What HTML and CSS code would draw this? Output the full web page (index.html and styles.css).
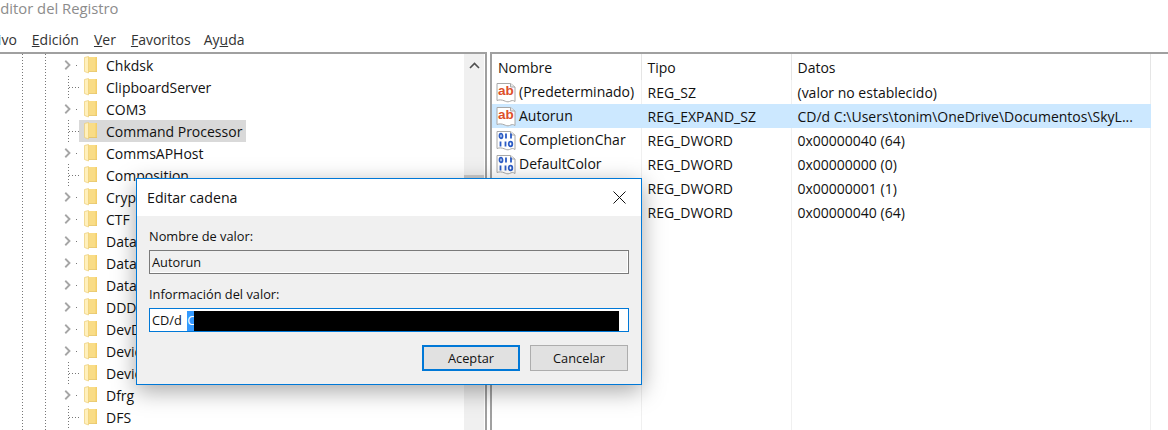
FILE: index.html
```html
<!DOCTYPE html>
<html lang="es">
    <head>
        <meta charset="UTF-8" />
        <title>Editor del Registro</title>
        <link rel="stylesheet" href="styles.css">
    </head>
    <body>
        <svg class="defs" width="0" height="0">
            <symbol id="folder" viewBox="0 0 13 18">
                <path d="M3 1h10v14.500H3z" fill="#f9dc86"/>
                <path d="M11.500 1H13v14.500h-1.500z" fill="#f3cf6c"/>
                <path d="M3 15h10v.7H3z" fill="#e3bd58"/>
                <path d="M.5 1.500 4.500 .5v16.500l-4-1.500z" fill="#fff0bd" stroke="#eccd72" stroke-width="0.7"/>
            </symbol>
            <symbol id="chevron" viewBox="0 0 9 12">
                <path d="M1.500 1 6.500 6 1.500 11" fill="none" stroke="#a6a6a6" stroke-width="2.200"/>
            </symbol>
            <symbol id="paper" viewBox="0 0 20 21">
                <path d="M1 1.500H14.500L19 5v14.500c-2-1.500-3.500-1-5.500 0-2 .8-3.500 0-5.500-.8-2-.8-4.500-1.200-7-.2z" fill="#fff" stroke="#a8a8a8"/>
                <path d="M14.500 1.500V5H19" fill="#e8e8e8" stroke="#a8a8a8"/>
            </symbol>
            <symbol id="reg-sz" viewBox="0 0 20 21">
                <use href="#paper" width="20" height="21"/>
                <text x="2" y="13" class="ab-text">ab</text>
            </symbol>
            <symbol id="reg-dword" viewBox="0 0 20 21">
                <use href="#paper" width="20" height="21"/>
                <g fill="none" stroke="#2c5cc5" stroke-width="1.800">
                    <ellipse cx="5" cy="6" rx="1.500" ry="2.300"/>
                    <path d="M10 3.500v5M15 3.500v5"/>
                    <path d="M4.500 11.500v5M9.500 11.500v5"/>
                    <ellipse cx="14.500" cy="14" rx="1.800" ry="2.300"/>
                </g>
            </symbol>
        </svg>

        <header class="titlebar">Editor del Registro</header>
        <nav class="menubar">
            <span><u>A</u>rchivo</span>
            <span><u>E</u>dición</span>
            <span><u>V</u>er</span>
            <span><u>F</u>avoritos</span>
            <span class="menu-last">Ay<u>u</u>da</span>
        </nav>

        <main class="panes">
            <section class="tree-pane">
                <ul class="tree" id="tree"></ul>
                <div class="scrollbar">
                    <div class="scroll-up">
                        <svg width="11" height="7" viewBox="0 0 11 7"><path d="M1 6 5.500 1.500 10 6" fill="none" stroke="#505050" stroke-width="1.600"/></svg>
                    </div>
                    <div class="scroll-thumb"></div>
                </div>
            </section>
            <section class="list-pane">
                <table class="values">
                    <thead>
                        <tr><th>Nombre</th><th>Tipo</th><th>Datos</th></tr>
                    </thead>
                    <tbody>
                        <tr>
                            <td><svg class="val-icon"><use href="#reg-sz"/></svg>(Predeterminado)</td>
                            <td>REG_SZ</td>
                            <td>(valor no establecido)</td>
                        </tr>
                        <tr class="selected">
                            <td><svg class="val-icon"><use href="#reg-sz"/></svg>Autorun</td>
                            <td>REG_EXPAND_SZ</td>
                            <td>CD/d C:\Users\tonim\OneDrive\Documentos\SkyL...</td>
                        </tr>
                        <tr>
                            <td><svg class="val-icon"><use href="#reg-dword"/></svg>CompletionChar</td>
                            <td>REG_DWORD</td>
                            <td>0x00000040 (64)</td>
                        </tr>
                        <tr>
                            <td><svg class="val-icon"><use href="#reg-dword"/></svg>DefaultColor</td>
                            <td>REG_DWORD</td>
                            <td>0x00000000 (0)</td>
                        </tr>
                        <tr>
                            <td><svg class="val-icon"><use href="#reg-dword"/></svg>EnableExtensions</td>
                            <td>REG_DWORD</td>
                            <td>0x00000001 (1)</td>
                        </tr>
                        <tr>
                            <td><svg class="val-icon"><use href="#reg-dword"/></svg>PathCompletionChar</td>
                            <td>REG_DWORD</td>
                            <td>0x00000040 (64)</td>
                        </tr>
                        <tr class="filler"><td></td><td></td><td></td></tr>
                    </tbody>
                </table>
            </section>
        </main>

        <div class="dialog">
            <div class="dialog-title">
                <span>Editar cadena</span>
                <svg width="13" height="13" viewBox="0 0 13 13"><path d="M.5.5l12 12M12.500.5l-12 12" stroke="#111" stroke-width="1"/></svg>
            </div>
            <div class="dialog-body">
                <label class="field-label">Nombre de valor:</label>
                <div class="field field-readonly">Autorun</div>
                <label class="field-label">Información del valor:</label>
                <div class="field field-active">
                    <span class="typed">CD/d&nbsp;</span><span class="sel">C</span><span class="redacted"></span>
                </div>
                <div class="dialog-buttons">
                    <button class="btn btn-default">Aceptar</button>
                    <button class="btn">Cancelar</button>
                </div>
            </div>
        </div>

        <script>
            // name, has children
            const KEYS = [
                ["Chkdsk", true],
                ["ClipboardServer", false],
                ["COM3", true],
                ["Command Processor", false],
                ["CommsAPHost", true],
                ["Composition", false],
                ["Cryptography", true],
                ["CTF", true],
                ["DataCollection", true],
                ["DataMarket", true],
                ["DataSharing", true],
                ["DDDS", true],
                ["DevDiv", true],
                ["Device Association", true],
                ["DeviceAccess", false],
                ["Dfrg", true],
                ["DFS", false],
            ];

            document.querySelector("#tree").innerHTML = KEYS.map(([name, kids]) => {
                const twist = kids
                    ? '<span class="twist"><svg width="9" height="12"><use href="#chevron"/></svg></span>'
                    : '<span class="twist leaf"></span>';
                const cls = name === "Command Processor" ? "key current" : "key";
                return `<li class="tree-row">${twist}<span class="${cls}"><svg class="folder" width="13" height="18"><use href="#folder"/></svg><span>${name}</span></span></li>`;
            }).join("");
        </script>
    </body>
</html>
```

FILE: styles.css
```css
* {
    box-sizing: border-box;
}
html,
body {
    margin: 0;
    height: 430px;
    overflow: hidden;
}
body {
    background: white;
    color: #111;
    font-family: "Open Sans", "Noto Sans", sans-serif;
    font-size: 14px;
    display: flex;
    flex-direction: column;
    position: relative;
}
.defs {
    position: absolute;
}
.ab-text {
    font-family: "Liberation Sans", sans-serif;
    font-weight: bold;
    font-size: 13.500px;
    fill: #dd4f2b;
}
.titlebar {
    height: 28px;
    margin-left: -8px;
    line-height: 17px;
    color: #8c8c8c;
    font-size: 14.800px;
}
.menubar {
    height: 24px;
    padding-bottom: 2px;
    margin-left: -32px;
    display: flex;
    gap: 15px;
    align-items: center;
    color: #333;
    font-size: 14px;
}
.menu-last {
    margin-left: -2px;
}
.panes {
    flex: 1;
    min-height: 0;
    display: flex;
    gap: 3px;
}
.tree-pane {
    width: 487px;
    border-top: 2px solid #a0a0a0;
    border-right: 2px solid #a0a0a0;
    display: flex;
    overflow: hidden;
}
.tree {
    list-style: none;
    margin: 0;
    padding: 0 0 0 62px;
    flex: 1;
    background-image:
        repeating-linear-gradient(#777 0 1px, transparent 1px 3px),
        repeating-linear-gradient(#777 0 1px, transparent 1px 3px);
    background-size: 1px 100%;
    background-position: 22px 0, 45px 0;
    background-repeat: no-repeat;
}
.tree-row {
    height: 22px;
    display: flex;
    align-items: center;
}
.twist {
    width: 17px;
    height: 22px;
    display: flex;
    align-items: center;
    flex: none;
}
.twist svg {
    margin-left: 2px;
}
.twist::after {
    content: "";
    width: 4px;
    height: 1px;
    margin-left: 4px;
    background: repeating-linear-gradient(90deg, #777 0 1px, transparent 1px 3px);
}
.twist.leaf {
    background: repeating-linear-gradient(#777 0 1px, transparent 1px 3px) 6px 0 / 1px 100% no-repeat;
}
.twist.leaf::after {
    width: 11px;
    margin-left: 7px;
}
.key {
    height: 22px;
    display: flex;
    align-items: center;
    gap: 9px;
    padding: 0 4px 0 5px;
}
.folder {
    flex: none;
}
.current {
    background: #d9d9d9;
}
.scrollbar {
    width: 20px;
    margin-right: 1px;
    background: #f0f0f0;
    display: flex;
    flex-direction: column;
}
.scroll-up {
    height: 121px;
    padding-top: 8px;
    display: flex;
    justify-content: center;
    align-items: flex-start;
}
.scroll-thumb {
    height: 150px;
    background: #cdcdcd;
}
.list-pane {
    flex: 1;
    border-top: 2px solid #a0a0a0;
    border-left: 2px solid #a0a0a0;
    overflow: hidden;
}
.values {
    border-collapse: collapse;
    table-layout: fixed;
    width: 659px;
    height: 376px;
}
.values th {
    height: 26px;
    padding: 0 0 0 6px;
    text-align: left;
    font-weight: normal;
    border-right: 1px solid #e5e5e5;
}
.values th:first-child,
.values td:first-child {
    width: 149px;
}
.values th:nth-child(2),
.values td:nth-child(2) {
    width: 150px;
}
.values td {
    height: 24px;
    padding: 0 0 0 6px;
    white-space: nowrap;
    overflow: hidden;
    border-right: 1px solid #f0f0f0;
}
.values td:first-child {
    padding-left: 4px;
}
.val-icon {
    width: 20px;
    height: 21px;
    vertical-align: -6px;
    margin-right: 3px;
}
.selected td {
    background: #cce8ff;
    border-right-color: #cce8ff;
}
.filler td {
    height: auto;
}

/* dialog floats over the registry window */
.dialog {
    position: absolute;
    left: 136px;
    top: 178px;
    width: 506px;
    height: 207px;
    border: 1px solid #0078d7;
    background: #f0f0f0;
    box-shadow: 0 6px 22px rgba(0, 0, 0, 0.35);
    font-size: 12.800px;
    display: flex;
    flex-direction: column;
}
.dialog-title {
    height: 37px;
    padding: 0 15px 0 10px;
    background: white;
    font-size: 14.200px;
    display: flex;
    justify-content: space-between;
    align-items: center;
}
.dialog-body {
    flex: 1;
    padding: 12px 12px 0 12px;
    display: flex;
    flex-direction: column;
}
.field-label {
    height: 22px;
    line-height: 16px;
}
.field {
    height: 24px;
    width: 480px;
    padding: 0 2px;
    display: flex;
    align-items: center;
}
.field-readonly {
    border: 1px solid #7a7a7a;
    box-shadow: inset -1px -1px 0 white;
    margin-bottom: 12px;
}
.field-active {
    border: 1px solid #0078d7;
    background: white;
}
.typed {
    margin-top: -1px;
}
.sel {
    background: #3399ff;
    color: white;
    width: 7px;
    height: 20px;
    margin-left: 2px;
    margin-top: 1px;
    overflow: hidden;
    line-height: 18px;
}
.redacted {
    width: 425px;
    height: 20px;
    margin-top: 1px;
    background: black;
}
.dialog-buttons {
    margin-top: 13px;
    padding-right: 1px;
    display: flex;
    justify-content: flex-end;
    gap: 10px;
}
.btn {
    width: 98px;
    height: 26px;
    padding: 0;
    border: 1px solid #adadad;
    background: #e1e1e1;
    color: #111;
    font: inherit;
}
.btn-default {
    border: 2px solid #0078d7;
}
```
